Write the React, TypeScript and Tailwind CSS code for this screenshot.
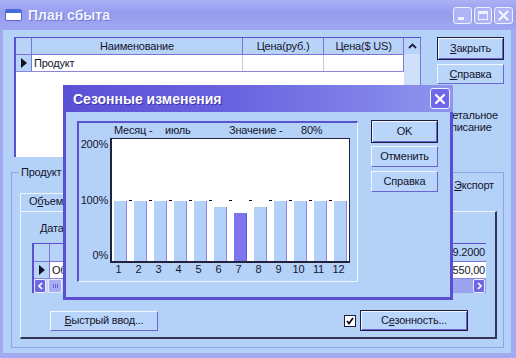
import React from 'react';

type BtnProps = { children: React.ReactNode; className?: string; primary?: boolean };

// XP-styled push button, bevel edges in the blue/lilac theme
function WinButton({ children, className = '', primary = false }: BtnProps) {
  return (
    <div
      className={`flex items-center justify-center bg-[#b9d5f9] ${
        primary
          ? 'border border-[#1c1c40] shadow-[inset_1px_1px_0_#f2f7ff,inset_-1px_-1px_0_#6a64d6]'
          : 'border border-t-[#f2f7ff] border-l-[#f2f7ff] border-r-[#6a64d6] border-b-[#6a64d6]'
      } ${className}`}
    >
      {children}
    </div>
  );
}

const RowMarker = () => (
  <svg width="6" height="10" viewBox="0 0 6 10">
    <polygon points="0,0 6,5 0,10" fill="#101020" />
  </svg>
);

const months = [100, 100, 100, 100, 100, 90, 80, 90, 100, 100, 100, 100];
const current = 7;

const App: React.FC = () => {
  return (
    <div className="relative flex h-[358px] w-[516px] flex-col overflow-hidden bg-[#b4d2f8] font-['Liberation_Sans',Arial,sans-serif] text-[11px] leading-[13px] tracking-[-0.2px] text-[#14142e]">
      {/* Main window title bar */}
      <div className="flex h-[30px] shrink-0 items-center bg-[linear-gradient(180deg,#aab1f4,#969cee_45%,#a0a7f1)] pl-[5px] pr-[3px]">
        <svg width="17" height="12" viewBox="0 0 17 12">
          <rect x="0.5" y="0.5" width="16" height="11" rx="1.5" fill="#ffffff" stroke="#5a62cc" />
          <rect x="1" y="1" width="15" height="3" fill="#3f70e2" />
        </svg>
        <span className="ml-[6px] text-[14px] font-bold leading-[16px] tracking-normal text-[#eef2ff] [text-shadow:1px_1px_0_#7076d8]">
          План сбыта
        </span>
        <div className="ml-auto flex gap-[2px]">
          <div className="flex h-[17px] w-[19px] items-end rounded-[3px] border border-[#eef2ff] bg-[#aeb4f5] pb-[3px] pl-[4px]">
            <div className="h-[3px] w-[6px] bg-[#eef2ff]" />
          </div>
          <div className="flex h-[17px] w-[18px] items-center justify-center rounded-[3px] border border-[#eef2ff] bg-[#aeb4f5]">
            <div className="h-[9px] w-[10px] border border-t-[3px] border-[#eef2ff]" />
          </div>
          <div className="flex h-[17px] w-[19px] items-center justify-center rounded-[3px] border border-[#eef2ff] bg-[#aeb4f5]">
            <svg width="11" height="11" viewBox="0 0 11 11">
              <path d="M1.5 1.5 L9.5 9.5 M9.5 1.5 L1.5 9.5" stroke="#f4f6ff" strokeWidth="2.2" strokeLinecap="round" />
            </svg>
          </div>
        </div>
      </div>

      {/* Main window body */}
      <div className="flex flex-1 flex-col border-b-[5px] border-l-[3px] border-r-[5px] border-[#a2aaf1]">
        <div className="flex pl-[11px] pt-[7px]">
          {/* Product grid */}
          <div className="flex h-[120px] w-[407px] border-l-2 border-t border-[#5a50d0]">
            <div className="flex w-[388px] flex-col">
              <div className="flex h-[17px] border-b border-[#7a76d8] bg-[#b7d3f8]">
                <div className="w-[16px] border-r border-[#7a76d8]" />
                <div className="w-[211px] border-r border-[#7a76d8] text-center leading-[16px]">Наименование</div>
                <div className="w-[81px] border-r border-[#7a76d8] text-center leading-[16px]">Цена(руб.)</div>
                <div className="w-[80px] border-r border-[#7a76d8] text-center leading-[16px]">Цена($ US)</div>
              </div>
              <div className="flex h-[17px] border-b border-[#8a86dc]">
                <div className="flex w-[16px] items-center justify-center border-r border-[#7a76d8] bg-[#b7d3f8]">
                  <RowMarker />
                </div>
                <div className="w-[211px] border-r border-[#c8c8dc] bg-white pl-[2px] leading-[16px]">Продукт</div>
                <div className="w-[81px] border-r border-[#c8c8dc] bg-white" />
                <div className="w-[80px] border-r border-[#7a76d8] bg-white" />
              </div>
              <div className="flex-1 bg-white" />
            </div>
            <div className="flex w-[17px] flex-col border-r border-[#7a76d8] bg-[#cfe0fa]">
              <div className="flex h-[16px] items-center justify-center bg-[#b7d3f8]">
                <svg width="9" height="6" viewBox="0 0 9 6">
                  <path d="M1 5 L4.5 1.5 L8 5" fill="none" stroke="#202040" strokeWidth="1.8" />
                </svg>
              </div>
            </div>
          </div>

          {/* Right side buttons */}
          <div className="ml-[16px] flex w-[67px] flex-col">
            <WinButton primary className="h-[23px]">
              <span>
                <span className="underline">З</span>акрыть
              </span>
            </WinButton>
            <WinButton className="mt-[4px] h-[20px]">
              <span>
                <span className="underline">С</span>правка
              </span>
            </WinButton>
            <div className="ml-[8px] mt-[25px] leading-[12px]">
              <span className="underline">Д</span>етальное
              <br />
              описание
            </div>
          </div>
        </div>

        {/* Product group box */}
        <div className="relative ml-[8px] mt-[15px] flex h-[176px] w-[493px] flex-col border border-[#8ea6e6]">
          <div className="absolute -top-[7px] left-[7px] bg-[#b4d2f8] px-[2px]">Продукт</div>
          <div className="h-[20px] pl-[442px] pt-[6px]">
            <span className="underline">Э</span>кспорт
          </div>
          <div className="ml-[8px] h-[18px] w-[62px] border-l border-r border-t border-l-[#eef5ff] border-r-[#6c66d8] border-t-[#eef5ff] pl-[8px] pt-[1px]">
            О<span className="underline">б</span>ъем
          </div>
          <div className="ml-[8px] flex h-[128px] w-[477px] flex-col border-b-2 border-l border-r-2 border-t border-b-[#34345a] border-l-[#eef5ff] border-r-[#34345a] border-t-[#eef5ff]">
            <div className="ml-[19px] mt-[10px]">Дата</div>

            {/* Volume grid */}
            <div className="ml-[11px] mt-[8px] flex h-[50px] w-[454px] flex-col border-l-2 border-t border-[#5a50d0]">
              <div className="flex h-[18px] border-b border-[#7a76d8] bg-[#b7d3f8]">
                <div className="w-[16px] border-r border-[#7a76d8]" />
                <div className="flex-1 border-r border-[#7a76d8]" />
                <div className="w-[60px] pr-[1px] text-right leading-[17px]">01.09.2000</div>
              </div>
              <div className="flex h-[17px] border-b border-[#8a86dc]">
                <div className="flex w-[16px] items-center justify-center border-r border-[#7a76d8] bg-[#b7d3f8]">
                  <RowMarker />
                </div>
                <div className="flex-1 border-r border-[#c8c8dc] bg-white pl-[2px] leading-[16px]">Объем</div>
                <div className="w-[60px] bg-white pr-[1px] text-right leading-[16px]">550,00</div>
              </div>
              <div className="flex h-[14px] items-stretch bg-[linear-gradient(90deg,#c9d8fa,#a9b6f4_70%,#98a0ee)]">
                <div className="flex w-[12px] items-center justify-center rounded-[2px] border border-[#e6ecff] bg-[#6f66e2]">
                  <svg width="5" height="8" viewBox="0 0 5 8">
                    <path d="M4 1 L1 4 L4 7" fill="none" stroke="#ffffff" strokeWidth="1.6" />
                  </svg>
                </div>
                <div className="ml-[2px] flex w-[14px] items-center justify-center rounded-[2px] border border-[#e6ecff] bg-[#a6aef4]">
                  <div className="flex gap-[1px]">
                    <div className="h-[4px] w-[1px] bg-[#6c66d8]" />
                    <div className="h-[4px] w-[1px] bg-[#6c66d8]" />
                    <div className="h-[4px] w-[1px] bg-[#6c66d8]" />
                  </div>
                </div>
                <div className="flex-1" />
                <div className="mr-[1px] flex w-[12px] items-center justify-center rounded-[2px] border border-[#e6ecff] bg-[#6f66e2]">
                  <svg width="5" height="8" viewBox="0 0 5 8">
                    <path d="M1 1 L4 4 L1 7" fill="none" stroke="#ffffff" strokeWidth="1.6" />
                  </svg>
                </div>
              </div>
            </div>

            <div className="mt-[17px] flex items-center">
              <WinButton className="ml-[29px] h-[20px] w-[108px]">
                <span>
                  <span className="underline">Б</span>ыстрый ввод...
                </span>
              </WinButton>
              <div className="ml-[186px] flex h-[12px] w-[12px] items-center justify-center border border-[#1c1c40] bg-white">
                <svg width="8" height="8" viewBox="0 0 8 8">
                  <path d="M1 4 L3 6.5 L7 1" fill="none" stroke="#101020" strokeWidth="1.8" />
                </svg>
              </div>
              <WinButton primary className="ml-[4px] h-[21px] w-[108px]">
                <span>
                  С<span className="underline">е</span>зонность...
                </span>
              </WinButton>
            </div>
          </div>
        </div>
      </div>

      {/* Seasonal changes dialog */}
      <div className="absolute left-[63px] top-[85px] flex h-[215px] w-[390px] flex-col">
        <div className="flex h-[27px] shrink-0 items-center bg-[linear-gradient(90deg,#5a50d6,#6a64e0_45%,#8f95ee)] pl-[10px] pr-[3px]">
          <span className="text-[14px] font-bold leading-[16px] tracking-normal text-white [text-shadow:1px_1px_0_#3c34a8]">
            Сезонные изменения
          </span>
          <div className="ml-auto flex h-[21px] w-[20px] items-center justify-center rounded-[3px] border border-[#f0f2ff] bg-[#7068e6]">
            <svg width="12" height="12" viewBox="0 0 12 12">
              <path d="M2 2 L10 10 M10 2 L2 10" stroke="#ffffff" strokeWidth="2.2" strokeLinecap="round" />
            </svg>
          </div>
        </div>
        <div className="flex flex-1 border-b-[3px] border-l-[3px] border-r-[3px] border-[#5a4fd4] bg-[#b4d2f8] pl-[11px] pt-[9px]">
          {/* Chart panel */}
          <div className="flex h-[161px] w-[281px] flex-col border-b border-l-2 border-r border-t-2 border-b-[#eef5ff] border-l-[#5a52d0] border-r-[#eef5ff] border-t-[#5a52d0]">
            <div className="mt-[1px] flex h-[14px]">
              <div className="w-[35px]" />
              <div className="w-[51px]">Месяц -</div>
              <div className="w-[64px]">июль</div>
              <div className="w-[72px]">Значение -</div>
              <div>80%</div>
            </div>
            <div className="flex">
              <div className="flex h-[124px] w-[31px] flex-col items-end justify-between pr-[2px]">
                <span>200%</span>
                <span>100%</span>
                <span>0%</span>
              </div>
              <div className="flex h-[125px] w-[240px] items-end border border-b-2 border-l-2 border-[#22223a] bg-white pl-[2px]">
                {months.map((v, i) => (
                  <div key={i} className="flex items-end">
                    <div
                      className={`w-[13px] border-r ${
                        i + 1 === current ? 'border-[#5f56dc] bg-[#7d75ee]' : 'border-[#8c88e6] bg-[#b2d0f8]'
                      }`}
                      style={{ height: `${v * 0.6}px` }}
                    />
                    {i < months.length - 1 && (
                      <div className="flex h-[61px] w-[7px] justify-center">
                        <div className="h-[1px] w-[3px] bg-[#101020]" />
                      </div>
                    )}
                  </div>
                ))}
              </div>
            </div>
            <div className="flex h-[13px] pl-[33px]">
              {months.map((_, i) => (
                <div key={i} className="mr-[7px] flex w-[13px] justify-center">
                  {i + 1}
                </div>
              ))}
            </div>
          </div>

          {/* Dialog buttons */}
          <div className="-mt-[1px] ml-[13px] flex w-[67px] flex-col">
            <WinButton primary className="h-[23px]">OK</WinButton>
            <WinButton className="mt-[3px] h-[21px]">Отменить</WinButton>
            <WinButton className="mt-[4px] h-[21px]">Справка</WinButton>
          </div>
        </div>
      </div>
    </div>
  );
};

export default App;
